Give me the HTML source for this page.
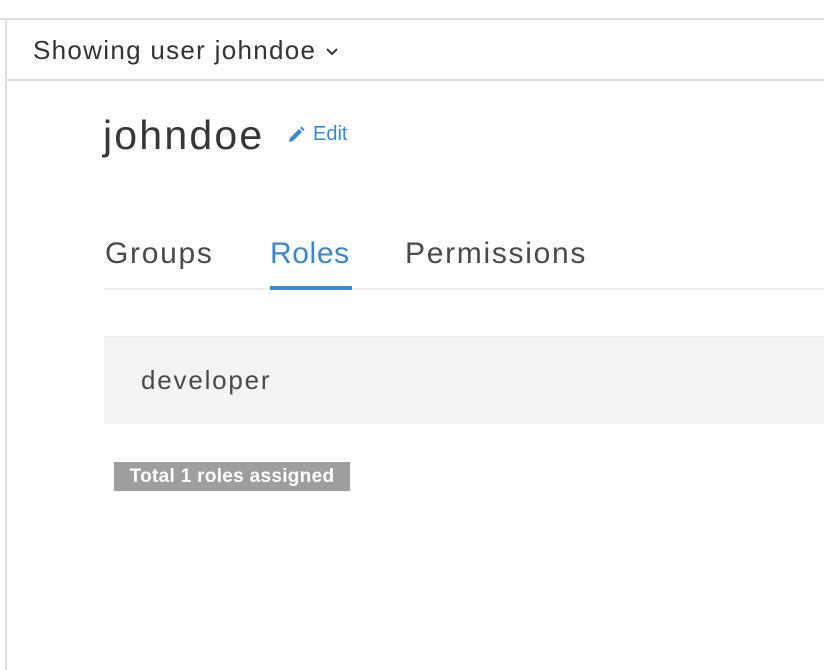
<!DOCTYPE html>
<html><head><style>
body{margin:0;width:824px;height:670px;background:#fff;font-family:"Liberation Sans",sans-serif;position:relative;overflow:hidden;color:#363636}
.abs{position:absolute;white-space:nowrap}
</style></head><body>
<div class="abs" style="left:0;top:18px;width:824px;height:2px;background:#dedede"></div>
<div class="abs" style="left:5px;top:19px;width:2px;height:651px;background:#dedede"></div>
<div class="abs" style="left:6px;top:79px;width:818px;height:2px;background:#dedede"></div>
<div class="abs" style="left:33px;top:35px;font-size:26px;letter-spacing:1.3px;color:#333">Showing user johndoe <svg width="14" height="10" viewBox="0 0 14 10" style="vertical-align:2px"><path d="M2 2 L7 7 L12 2" stroke="#333" stroke-width="2" fill="none"/></svg></div>
<div class="abs" style="left:103px;top:112px;font-size:41px;letter-spacing:2.2px;color:#363636">johndoe</div>
<svg class="abs" style="left:287px;top:126px" width="18" height="18" viewBox="0 0 18 18"><path d="M2 16 L3 12 L12 3 L15 6 L6 15 Z M13 2 L14.5 0.5 L17.5 3.5 L16 5 Z" fill="#3a87cc"/></svg>
<div class="abs" style="left:313px;top:123px;font-size:20px;color:#3a87cc">Edit</div>
<div class="abs" style="left:105px;top:237px;font-size:30px;letter-spacing:1.7px;color:#4a4a4a">Groups</div>
<div class="abs" style="left:270px;top:237px;font-size:30px;letter-spacing:0.6px;color:#3a87cc">Roles</div>
<div class="abs" style="left:405px;top:237px;font-size:30px;letter-spacing:1.7px;color:#4a4a4a">Permissions</div>
<div class="abs" style="left:104px;top:288px;width:720px;height:2px;background:#ededed"></div>
<div class="abs" style="left:270px;top:286px;width:82px;height:4px;background:#3a87cc"></div>
<div class="abs" style="left:104px;top:336px;width:720px;height:87px;background:#f4f4f4;border-top:1px solid #ececec"></div>
<div class="abs" style="left:141px;top:365px;font-size:26px;letter-spacing:1.8px;color:#4a4a4a">developer</div>
<div class="abs" style="left:114px;top:462px;width:236px;height:29px;background:#9e9e9e;color:#fff;font-weight:bold;font-size:19px;letter-spacing:0.3px;line-height:29px;text-align:center">Total 1 roles assigned</div>
</body></html>
